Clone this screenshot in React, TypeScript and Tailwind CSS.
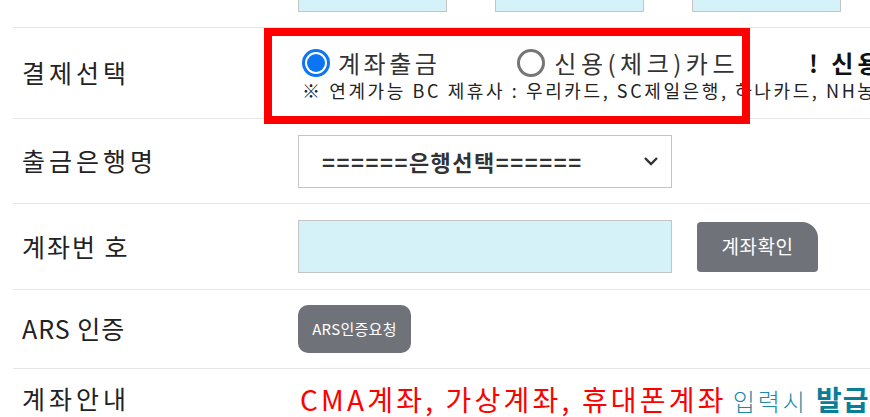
import React from 'react';

const baseFont = { fontFamily: '"Noto Sans CJK KR", "Noto Sans", sans-serif' };

const Row = ({
  label,
  children,
  h,
  track = 'tracking-[4px]',
}: {
  label: string;
  children?: React.ReactNode;
  h: string;
  track?: string;
}) => (
  <div className={`ml-[13px] flex items-center border-b border-[#e6e6e6] ${h}`}>
    <div className={`w-[285px] shrink-0 whitespace-pre pl-[9px] text-[25px] text-[#222] ${track}`}>{label}</div>
    <div className="flex min-w-0 flex-1 items-center">{children}</div>
  </div>
);

const Radio = ({ checked }: { checked?: boolean }) =>
  checked ? (
    <span className="flex h-[28px] w-[28px] shrink-0 items-center justify-center rounded-full border-[3px] border-[#0b75f3] bg-white">
      <span className="block h-[18px] w-[18px] rounded-full bg-[#0b75f3]" />
    </span>
  ) : (
    <span className="block h-[28px] w-[28px] shrink-0 rounded-full border-[3px] border-[#767676] bg-white" />
  );

export default function App() {
  return (
    <div className="relative h-[417px] w-[870px] overflow-hidden bg-white" style={baseFont}>
      {/* 위쪽 잘린 입력칸 */}
      <div className="ml-[13px] flex h-[28px] items-start border-b border-[#e6e6e6] pl-[285px]">
        <div className="-mt-[41px] flex gap-[48px]">
          <div className="h-[53px] w-[149px] border border-[#c4c4c4] bg-[#d4f2f7]" />
          <div className="h-[53px] w-[149px] border border-[#c4c4c4] bg-[#d4f2f7]" />
          <div className="h-[53px] w-[149px] border border-[#c4c4c4] bg-[#d4f2f7]" />
        </div>
      </div>

      {/* 결제선택 */}
      <Row label="결제선택" h="h-[91px]">
        <div className="flex flex-col whitespace-nowrap pl-[4px] pt-[2px]">
          <div className="flex items-center">
            <Radio checked />
            <span className="ml-[8px] text-[24px] leading-[28px] tracking-[3.5px] text-[#333]">계좌출금</span>
            <span className="ml-[77px] flex">
              <Radio />
            </span>
            <span className="ml-[9px] text-[24px] leading-[28px] tracking-[4.5px] text-[#333]">신용(체크)카드</span>
            <span className="ml-[70px] text-[24px] font-bold leading-[28px] tracking-[4px] text-[#111]">! 신용</span>
          </div>
          <div className="mt-[3px] text-[18px] leading-[20px] tracking-[2.6px] text-[#222]">
            ※ 연계가능 BC 제휴사 : 우리카드, SC제일은행, 하나카드, NH농협카드
          </div>
        </div>
      </Row>

      {/* 출금은행명 */}
      <Row label="출금은행명" h="h-[85px]">
        <div className="flex h-[53px] w-[374px] items-center justify-between border border-[#c4c4c4] bg-white pl-[23px] pr-[6px]">
          <span className="text-[22px] font-bold tracking-[1.5px] text-[#333]">======은행선택======</span>
          <svg width="16" height="10" viewBox="0 0 16 10" className="mr-[6px]">
            <path d="M2 2 L8 8 L14 2" fill="none" stroke="#333" strokeWidth="2.4" />
          </svg>
        </div>
      </Row>

      {/* 계좌번호 */}
      <Row label="계좌번 호" h="h-[86px]" track="tracking-[2px]">
        <div className="h-[53px] w-[374px] border border-[#c4c4c4] bg-[#d4f2f7]" />
        <button className="ml-[25px] flex h-[50px] w-[121px] items-center justify-center rounded-[4px] rounded-tr-[16px] bg-[#6f7279] text-[19px] tracking-[0.5px] text-white">
          계좌확인
        </button>
      </Row>

      {/* ARS 인증 */}
      <Row label="ARS 인증" h="h-[79px]" track="tracking-[1px]">
        <button className="flex h-[48px] w-[113px] items-center justify-center rounded-[10px] bg-[#6f7279] text-[15px] tracking-[0.3px] text-white">
          ARS인증요청
        </button>
      </Row>

      {/* 계좌안내 */}
      <div className="ml-[13px] flex h-[60px] items-center">
        <div className="w-[285px] shrink-0 pl-[9px] text-[25px] tracking-[4px] text-[#222]">계좌안내</div>
        <div className="flex items-baseline whitespace-nowrap pl-[2px]">
          <span className="text-[28px] tracking-[3.2px] text-[#ff0000]">CMA계좌, 가상계좌, 휴대폰계좌</span>
          <span className="ml-[6px] text-[24px] font-light tracking-[3px] text-[#1d8aa8]">입력시</span>
          <span className="ml-[8px] text-[28px] font-bold tracking-[1px] text-[#0a7d97]">발급</span>
        </div>
      </div>

      {/* 빨간 강조 박스 */}
      <div className="pointer-events-none absolute left-[264px] top-[28px] h-[96px] w-[486px] border-[8px] border-[#ff0000]" />
    </div>
  );
}
